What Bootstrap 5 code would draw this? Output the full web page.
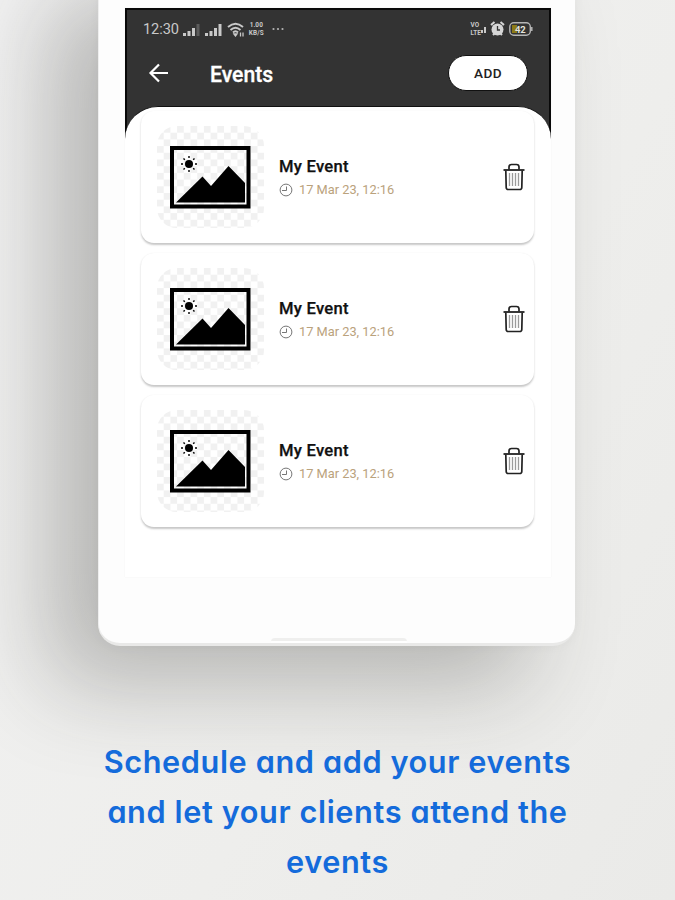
<!DOCTYPE html>
<html lang="en">
<head>
<meta charset="utf-8">
<meta name="viewport" content="width=device-width, initial-scale=1">
<title>Events</title>
<link href="https://cdn.jsdelivr.net/npm/bootstrap@5.3.0/dist/css/bootstrap.min.css" rel="stylesheet">
<style>
  body { height: 900px; background: linear-gradient(120deg, #f2f2f2, #eeeeec 60%, #eaeae8); font-family: Roboto, "Liberation Sans", sans-serif; }
  .phone { width: 477px; height: 686px; margin: -40px 0 0 98px; padding: 48px 24px 0 27px; background: #fdfdfd; border-radius: 22px; border-bottom: 3px solid #e9e9e8; border-left: 1px solid #eee;
    box-shadow: -50px 38px 92px rgba(40,40,38,.29), 0 0 12px rgba(0,0,0,.04); position: relative; }
  .speaker { position: absolute; left: 172px; bottom: 0; width: 136px; height: 5px; background: #efefee; border-bottom: 2px solid #fff; border-radius: 4px 4px 0 0; }
  .phone-screen { height: 569px; width: 426px; margin-left: -1px; background: #fff; box-shadow: 0 0 1px #eee; }
  .app-head { height: 132px; background: #333; border: 2px solid #090909; border-bottom: 0; }
  .status { height: 18px; margin: 10px 16px 0 16px; color: #c9c9c9; font-size: 14.6px; letter-spacing: -.1px; }
  .clock-text { margin-top: 1px; }
  .tiny { font-size: 6.4px; line-height: 8px; font-weight: 700; letter-spacing: .1px; }
  .toolbar { height: 36px; margin: 17px 21px 0 21px; }
  .toolbar h1 { font-size: 21.2px; margin: 3px 0 0 41px; line-height: 1; font-weight: 500; -webkit-text-stroke: .3px #fff; }
  .add { width: 80px; height: 36px; border: 1.5px solid #111; font-size: 13.6px; font-weight: 500; color: #222; letter-spacing: .4px; padding-top: 1px !important; }
  .sheet { margin-top: -34px; height: 471px; background: #fff; border-radius: 33px 33px 0 0; padding: 4px 16px 0; position: relative; border-top: 1px solid #111; }
  .list { gap: 10px; }
  .event { height: 132px; border: 0; border-radius: 13px; box-shadow: 0 1.5px 2px rgba(0,0,0,.22); padding: 0 9px 0 16px; width: 393px; }
  .event h2 { font-size: 16.6px; font-weight: 500; line-height: 20px; margin: 0; color: #111; letter-spacing: .25px; -webkit-text-stroke: .25px #111; }
  .when { font-size: 12.8px; line-height: 16px; margin-top: 5px; color: #baa27c; gap: 6px; }
  .details { margin: 1px 0 0 15px; }
  .caption { margin: 91px auto 0; width: 500px; font: 600 30.7px/50.2px Inter, sans-serif; letter-spacing: .6px; font-feature-settings: "cv11"; color: #146bdb; }
</style>
</head>
<body class="overflow-hidden m-0">
<svg width="0" height="0" class="position-absolute" aria-hidden="true">
  <defs>
    <pattern id="checks" width="13.4" height="13.4" patternUnits="userSpaceOnUse"><path d="M0 6.700h6.700v6.700H0zM6.700 0h6.700v6.700H6.700z" fill="#f1f1f1"/></pattern>
    <symbol id="picture" viewBox="0 0 107 102">
      <rect width="107" height="102" rx="20" fill="url(#checks)"/>
      <path d="M15 22h76.500v58.500H15z" fill="none" stroke="#000" stroke-width="4"/>
      <path d="M19 76.500l26.500-26L54 60l17.500-20L88 57v19.500z"/>
      <circle cx="32" cy="38" r="4"/>
      <path d="M32 30v2M32 44v2M24 38h2M38 38h2M26.500 32.500l1.300 1.300M36.200 42.200l1.300 1.300M26.500 43.500l1.300-1.300M36.200 33.800l1.300-1.300" stroke="#000" stroke-width="1.400"/>
    </symbol>
    <symbol id="bin" viewBox="0 0 22 28">
      <g fill="none" stroke="#222"><path d="M.5 7h21" stroke-width="1.800"/><path d="M6 6.500V4q0-2.500 2.500-2.500h5Q16 1.500 16 4v2.500M2.800 7.500l.4 17q.1 2 2 2h11.600q1.900 0 2-2l.4-17" stroke-width="1.700"/></g>
      <path d="M6.500 10v13M9.500 10v13M12.500 10v13M15.500 10v13" stroke="#9b9b9b" stroke-width="1.300"/>
    </symbol>
    <symbol id="clock" viewBox="0 0 14 14"><g fill="none" stroke="#777"><circle cx="7" cy="7" r="5.900"/><path d="M3 7.500h4.500V3.500"/></g></symbol>
    <symbol id="signal" viewBox="0 0 18 13"><path d="M0 10h3v3H0zM4.500 8h3v5h-3zM9 5h3v8H9z"/></symbol>
  </defs>
</svg>
<main class="phone">
  <div class="phone-screen">
    <header class="app-head overflow-hidden">
      <div class="status d-flex align-items-center justify-content-between">
        <div class="d-flex align-items-center">
          <span class="clock-text">12:30</span>
          <svg class="ms-1" width="18" height="13" fill="#c9c9c9"><use href="#signal"/><path d="M13.500 1h3v12h-3z" fill="#5c5c5c"/></svg>
          <svg class="ms-1" width="18" height="13" fill="#c9c9c9"><use href="#signal"/><path d="M13.500 1h3v12h-3z"/></svg>
          <svg class="ms-1" width="18" height="15" viewBox="0 0 18 15" fill="none" stroke="#c9c9c9" stroke-width="1.900"><path d="M1 5q7.500-6.500 15 0M3.500 8q5-4.500 10 0M6 10.500q2.500-2.500 5 0"/><path d="M7 12l1.500 2L10 12zM13.500 10.500v4M16 10.500v4" stroke-width="1.300"/></svg>
          <span class="tiny ms-1 text-center">1.00<br>KB/S</span>
          <svg class="ms-2" width="13" height="4" fill="#b5b5b5"><circle cx="1.500" cy="2" r="1.100"/><circle cx="6" cy="2" r="1.100"/><circle cx="10.500" cy="2" r="1.100"/></svg>
        </div>
        <div class="d-flex align-items-center gap-1">
          <div class="d-flex align-items-end"><span class="tiny">VO<br>LTE</span><svg class="mb-1" width="5" height="6" fill="#c9c9c9"><path d="M0 3h2v3H0zM3 0h2v6H3z"/></svg></div>
          <svg width="15" height="16" viewBox="0 0 15 16"><path d="M1 4l3.500-3M14 4l-3.500-3M3 14l2-2M12 14l-2-2" stroke="#d5d5d5" stroke-width="2"/><circle cx="7.500" cy="8.500" r="6" fill="#d5d5d5"/><path d="M7.500 5v4H10" stroke="#333" stroke-width="1.300" fill="none"/></svg>
          <svg width="24" height="14" viewBox="0 0 24 14"><rect x=".8" y=".8" width="20.500" height="12.400" rx="4" fill="none" stroke="#b5b5b5" stroke-width="1.400"/><path d="M3 3h5v8H3z" fill="#8c7a17"/><path d="M22.800 5v4" stroke="#b5b5b5" stroke-width="1.500"/><text x="6" y="10.500" font-size="9.500" font-weight="700" fill="#e5e5dc">42</text></svg>
        </div>
      </div>
      <div class="toolbar d-flex align-items-center">
        <svg width="21" height="20" viewBox="0 0 21 20" fill="none" stroke="#fff" stroke-width="2.200"><path d="M20 10H3M11 1.500L2.500 10l8.500 8.500"/></svg>
        <h1 class="text-white">Events</h1>
        <button class="add btn btn-light bg-white rounded-pill ms-auto p-0">ADD</button>
      </div>
    </header>
    <section class="sheet">
      <div class="list d-flex flex-column">
        <article class="event card flex-row align-items-center">
          <svg width="107" height="102"><use href="#picture"/></svg>
          <div class="details"><h2>My Event</h2><div class="when d-flex align-items-center"><svg width="14" height="14"><use href="#clock"/></svg>17 Mar 23, 12:16</div></div>
          <svg class="ms-auto" width="22" height="28"><use href="#bin"/></svg>
        </article>
        <article class="event card flex-row align-items-center">
          <svg width="107" height="102"><use href="#picture"/></svg>
          <div class="details"><h2>My Event</h2><div class="when d-flex align-items-center"><svg width="14" height="14"><use href="#clock"/></svg>17 Mar 23, 12:16</div></div>
          <svg class="ms-auto" width="22" height="28"><use href="#bin"/></svg>
        </article>
        <article class="event card flex-row align-items-center">
          <svg width="107" height="102"><use href="#picture"/></svg>
          <div class="details"><h2>My Event</h2><div class="when d-flex align-items-center"><svg width="14" height="14"><use href="#clock"/></svg>17 Mar 23, 12:16</div></div>
          <svg class="ms-auto" width="22" height="28"><use href="#bin"/></svg>
        </article>
      </div>
    </section>
  </div>
  <div class="speaker"></div>
</main>
<p class="caption text-center position-relative">Schedule and add your events<br>and let your clients attend the<br>events</p>
<script src="https://cdn.jsdelivr.net/npm/bootstrap@5.3.0/dist/js/bootstrap.bundle.min.js"></script>
</body>
</html>
